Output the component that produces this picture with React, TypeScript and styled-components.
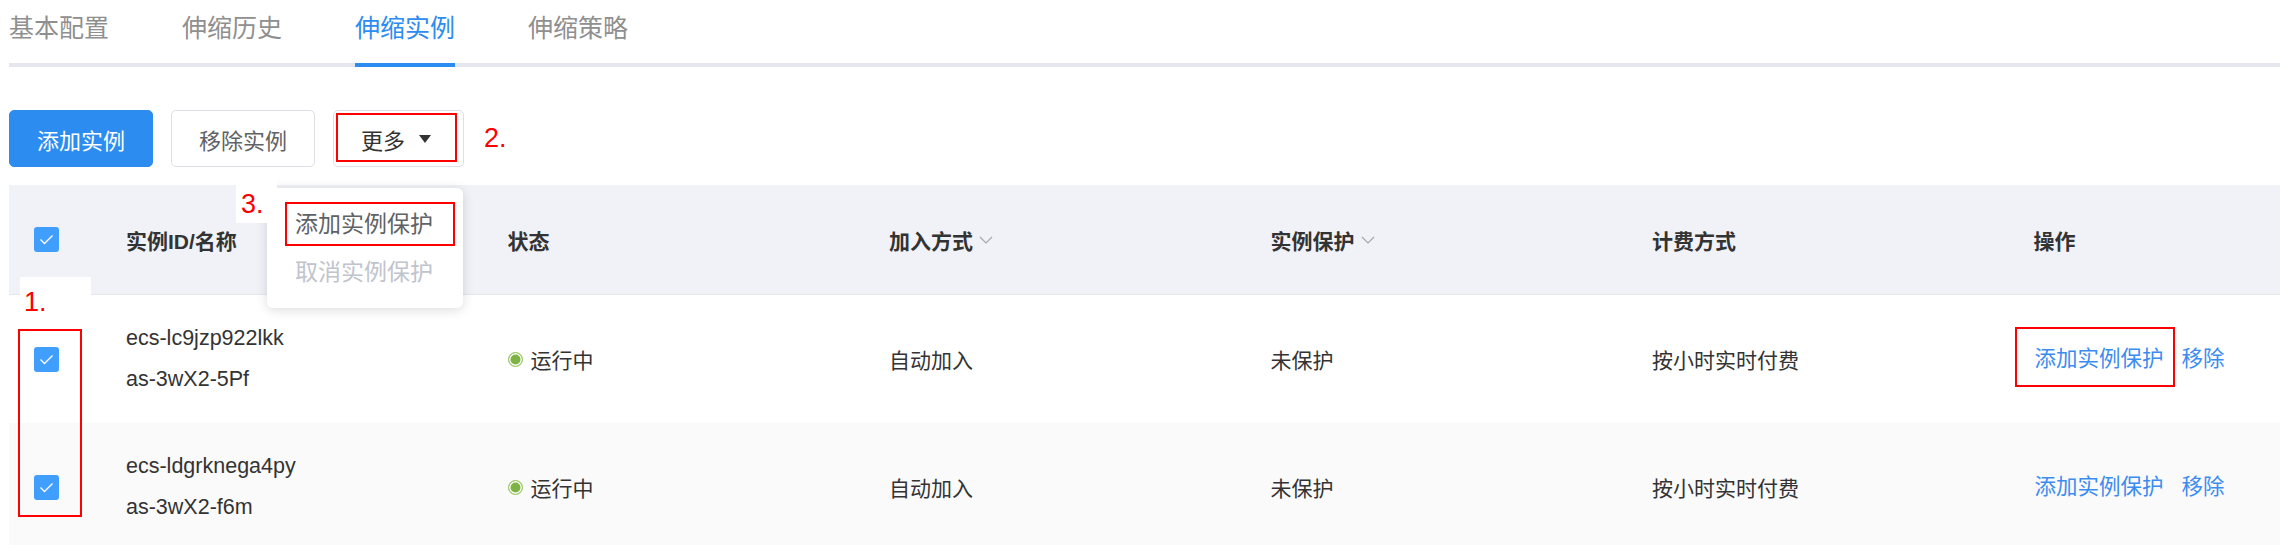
import styled, { createGlobalStyle, css } from 'styled-components';

const GlobalStyle = createGlobalStyle`
  html, body {
    margin: 0;
    background: #fff;
  }
  body {
    font-family: "Liberation Sans", "Noto Sans CJK SC", sans-serif;
    color: #333;
    overflow: hidden;
  }
`;

const Page = styled.div`
  padding-left: 9px;
`;

/* tabs */
const TabBar = styled.div`
  display: flex;
  gap: 73px;
  padding-top: 16px;
  border-bottom: 4px solid #e4e7ed;
`;

const Tab = styled.div<{ $active?: boolean }>`
  font-size: 25px;
  line-height: 25px;
  padding-bottom: 22px;
  margin-bottom: -4px;
  border-bottom: 4px solid ${p => (p.$active ? '#2d8cf0' : 'transparent')};
  color: ${p => (p.$active ? '#2d8cf0' : '#8f8f8f')};
`;

/* toolbar */
const Toolbar = styled.div`
  display: flex;
  align-items: center;
  gap: 18px;
  margin-top: 43px;
`;

const Button = styled.button<{ $primary?: boolean }>`
  box-sizing: border-box;
  width: 144px;
  height: 57px;
  padding: 0;
  border-radius: 5px;
  font-family: inherit;
  font-size: 22px;
  border: 1px solid ${p => (p.$primary ? '#2d8cf0' : '#dcdfe6')};
  background: ${p => (p.$primary ? '#2d8cf0' : '#fff')};
  color: ${p => (p.$primary ? '#fff' : '#606266')};
`;

const MoreWrap = styled.div`
  position: relative;
`;

const MoreButton = styled(Button)`
  position: relative;
  width: 131px;
  display: flex;
  align-items: center;
  gap: 14px;
  padding-left: 27px;
  color: #333;

  &::after {
    content: '';
    position: absolute;
    left: 2px;
    top: 2px;
    right: 6px;
    bottom: 4px;
    border: 2px solid #f00;
  }
`;

const Caret = styled.span`
  width: 0;
  height: 0;
  border-left: 6px solid transparent;
  border-right: 6px solid transparent;
  border-top: 8px solid #333;
`;

const Menu = styled.div`
  position: absolute;
  left: -66px;
  top: 78px;
  width: 196px;
  padding: 12px 0;
  background: #fff;
  border-radius: 6px;
  box-shadow: 0 2px 12px rgba(0, 0, 0, 0.14);
  z-index: 4;
`;

const MenuItem = styled.div<{ $disabled?: boolean; $marked?: boolean }>`
  position: relative;
  font-size: 23px;
  line-height: 48px;
  padding-left: 28px;
  color: ${p => (p.$disabled ? '#c0c4cc' : '#606266')};

  ${p =>
    p.$marked &&
    css`
      &::after {
        content: '';
        position: absolute;
        left: 18px;
        right: 8px;
        top: 2px;
        bottom: 2px;
        border: 2px solid #f00;
      }
    `}
`;

/* red step numbers */
const Mark = styled.span`
  color: #f00;
  font-family: "Liberation Sans", sans-serif;
  font-size: 27px;
  line-height: 27px;
`;

const MarkPatch = styled(Mark)<{ $left: number; $top: number; $w: number; $h: number; $pad: string }>`
  position: absolute;
  box-sizing: border-box;
  left: ${p => p.$left}px;
  top: ${p => p.$top}px;
  width: ${p => p.$w}px;
  height: ${p => p.$h}px;
  padding: ${p => p.$pad};
  background: #fff;
  z-index: 5;
`;

/* table */
const Table = styled.div`
  position: relative;
  margin-top: 18px;
`;

const Row = styled.div<{ $head?: boolean; $striped?: boolean }>`
  box-sizing: border-box;
  display: grid;
  grid-template-columns: 92px repeat(5, 381.5px) 1fr;
  align-items: center;
  height: ${p => (p.$head ? 110 : 128)}px;
  font-size: 21px;
  font-weight: ${p => (p.$head ? 700 : 400)};
  background: ${p => (p.$head ? '#f0f2f7' : p.$striped ? '#fafafa' : '#fff')};
  border-bottom: ${p => (p.$head ? '1px solid #e4e7ed' : 'none')};
`;

const Cell = styled.div`
  display: flex;
  align-items: center;
  gap: 6px;
  padding-left: 25px;
`;

const IdCell = styled.div`
  padding-left: 25px;
  font-size: 21.5px;
  line-height: 41px;
`;

const Check = styled.span`
  display: flex;
  align-items: center;
  justify-content: center;
  width: 25px;
  height: 25px;
  border-radius: 3px;
  background: #409eff;
`;

const Dot = styled.span`
  box-sizing: border-box;
  width: 15px;
  height: 15px;
  margin-right: 2px;
  border-radius: 50%;
  border: 1.5px solid #9ccc65;
  background: #7cb342;
  box-shadow: inset 0 0 0 1.5px #fff;
`;

const Actions = styled.div`
  display: flex;
  align-items: center;
  gap: 18px;
  padding-left: 26px;
`;

const Link = styled.a<{ $marked?: boolean }>`
  position: relative;
  font-size: 21.5px;
  line-height: 24px;
  color: #3b8cf0;

  ${p =>
    p.$marked &&
    css`
      &::before {
        content: '';
        position: absolute;
        left: -20px;
        right: -11px;
        top: -20px;
        bottom: -16px;
        border: 2px solid #f00;
      }
    `}
`;

const ColumnMark = styled.div`
  position: absolute;
  left: 9px;
  top: 144px;
  width: 64px;
  height: 188px;
  box-sizing: border-box;
  border: 2px solid #f00;
  z-index: 2;
`;

const Checkbox = () => (
  <Check>
    <svg width="15" height="11" viewBox="0 0 15 11">
      <polyline points="1.5,5.5 5.5,9.5 13.5,1.5" fill="none" stroke="#fff" strokeWidth="1.4" />
    </svg>
  </Check>
);

const SortArrow = () => (
  <svg width="14" height="8" viewBox="0 0 14 8">
    <polyline points="1,1 7,7 13,1" fill="none" stroke="#a4a8b0" strokeWidth="1.2" />
  </svg>
);

const instances = [
  { id: 'ecs-lc9jzp922lkk', name: 'as-3wX2-5Pf' },
  { id: 'ecs-ldgrknega4py', name: 'as-3wX2-f6m' },
];

export default function App() {
  return (
    <Page>
      <GlobalStyle />
      <TabBar>
        <Tab>基本配置</Tab>
        <Tab>伸缩历史</Tab>
        <Tab $active>伸缩实例</Tab>
        <Tab>伸缩策略</Tab>
      </TabBar>

      <Toolbar>
        <Button $primary>添加实例</Button>
        <Button>移除实例</Button>
        <MoreWrap>
          <MoreButton>
            更多
            <Caret />
          </MoreButton>
          <MarkPatch $left={-97} $top={66} $w={41} $h={47} $pad="15px 0 0 5px">3.</MarkPatch>
          <Menu>
            <MenuItem $marked>添加实例保护</MenuItem>
            <MenuItem $disabled>取消实例保护</MenuItem>
          </Menu>
        </MoreWrap>
        <Mark style={{ marginLeft: 2 }}>2.</Mark>
      </Toolbar>

      <Table>
        <Row $head>
          <Cell>
            <Checkbox />
          </Cell>
          <Cell>实例ID/名称</Cell>
          <Cell>状态</Cell>
          <Cell>
            加入方式
            <SortArrow />
          </Cell>
          <Cell>
            实例保护
            <SortArrow />
          </Cell>
          <Cell>计费方式</Cell>
          <Cell>操作</Cell>
        </Row>
        {instances.map((it, i) => (
          <Row key={it.id} $striped={i % 2 === 1}>
            <Cell>
              <Checkbox />
            </Cell>
            <IdCell>
              <div>{it.id}</div>
              <div>{it.name}</div>
            </IdCell>
            <Cell>
              <Dot />
              运行中
            </Cell>
            <Cell>自动加入</Cell>
            <Cell>未保护</Cell>
            <Cell>按小时实时付费</Cell>
            <Actions>
              <Link $marked={i === 0}>添加实例保护</Link>
              <Link>移除</Link>
            </Actions>
          </Row>
        ))}
        <MarkPatch $left={11} $top={92} $w={71} $h={40} $pad="12px 0 0 4px">1.</MarkPatch>
        <ColumnMark />
      </Table>
    </Page>
  );
}
